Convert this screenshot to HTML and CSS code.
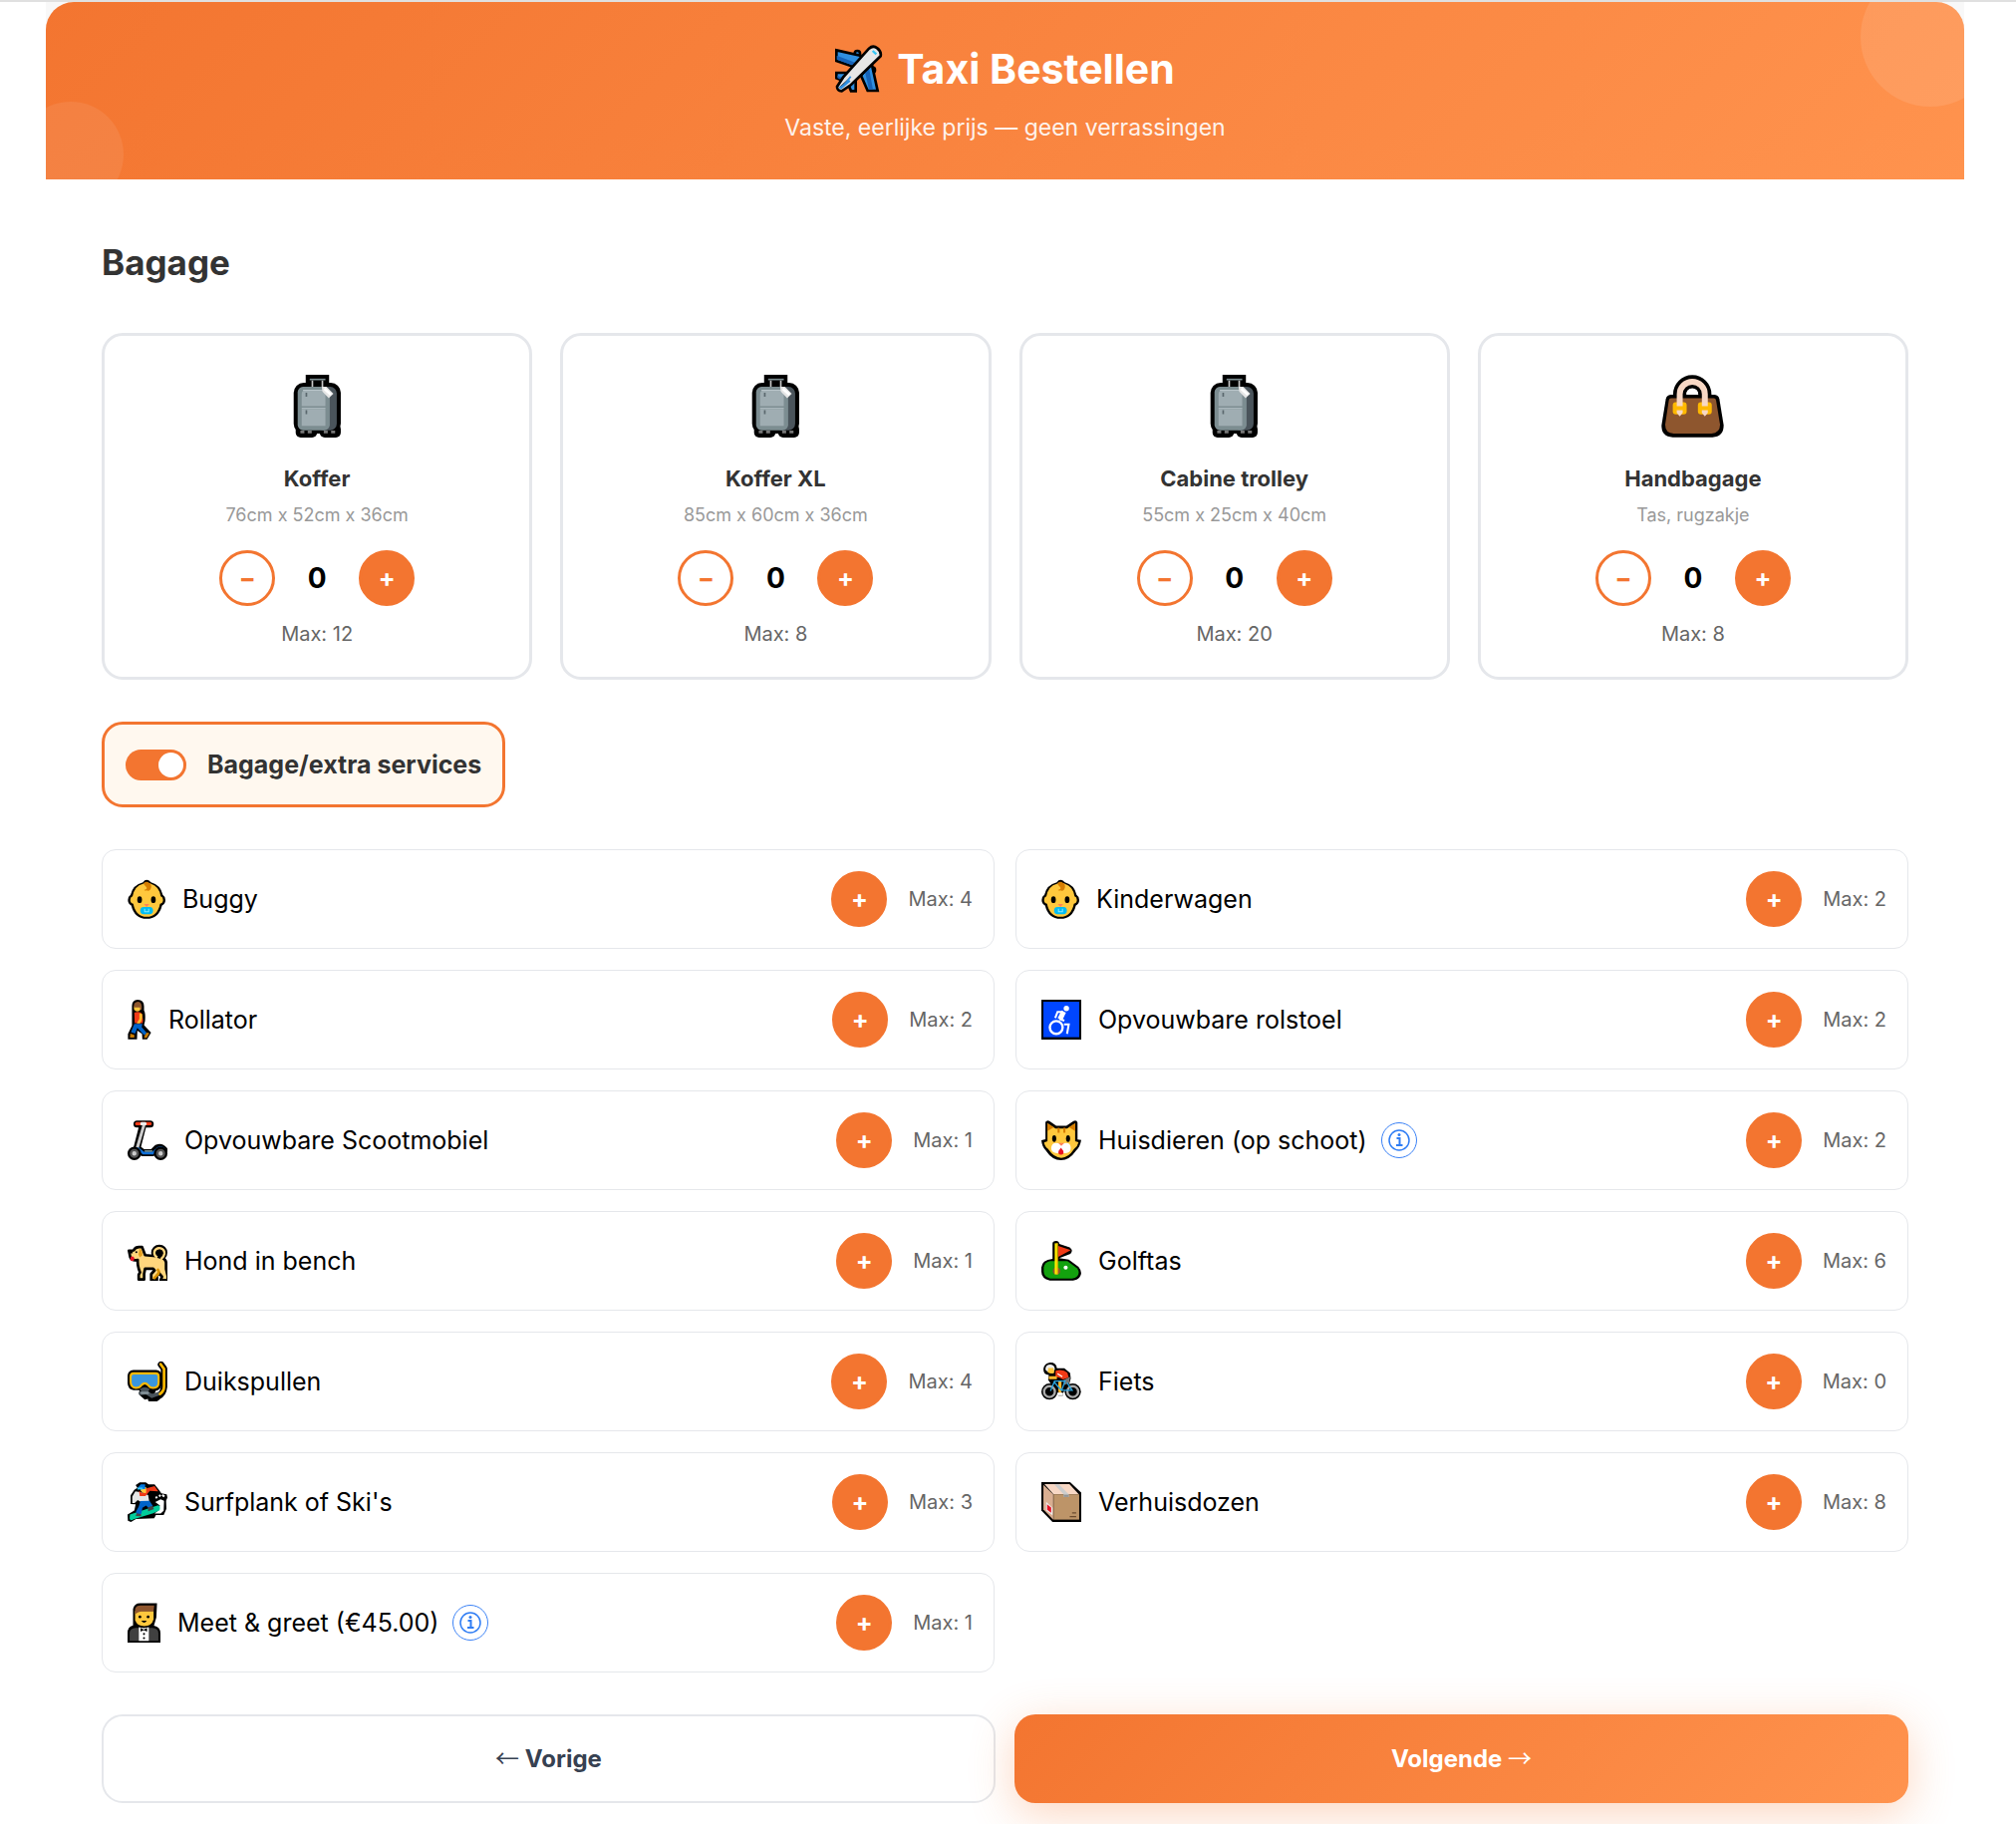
FILE: index.html
```html
<!DOCTYPE html>
<html lang="nl">
<head>
  <meta charset="UTF-8">
  <meta name="viewport" content="width=device-width, initial-scale=1.0">
  <title>Taxi Bestellen</title>
  <link rel="stylesheet" href="styles.css">
</head>
<body>
  <!-- Icon sprite -->
  <svg class="sprite" aria-hidden="true">
    <symbol id="i-koffer" viewBox="0 0 142 188">
      <rect x="36" width="70" height="50"/>
      <rect y="24" width="141" height="152" rx="30"/>
      <rect x="6" y="148" width="64" height="40" rx="15"/>
      <rect x="78" y="148" width="63" height="40" rx="15"/>
      <rect x="70" y="36" width="59" height="130" rx="20" fill="#4a545b"/>
      <rect x="12" y="36" width="96" height="130" rx="16" fill="#7c8d91"/>
      <path d="M24 58q0-12 12-12h59v48H24zM24 103h71v50H24z" fill="#9fadb2"/>
      <path d="M28 46h67M24 101h71" stroke="#b9c5ca" stroke-width="3"/>
      <path d="M38 54v12M38 106v12" stroke="#5b686e" stroke-width="5"/>
      <path d="M48 14h47" stroke="#7c8d91" stroke-width="5"/>
      <path d="M56 17v19M86 17v19" stroke="#c8c8c8" stroke-width="5"/>
      <path d="M84 36l14 0 21 21-14 13-19-20z" fill="#e6e6e6"/>
      <path d="M92 42l20 18" stroke="#fff" stroke-width="8"/>
      <path d="M20 171h12M42 171h12M90 171h12M112 171h12" stroke="#777" stroke-width="8"/>
    </symbol>
    <symbol id="i-tas" viewBox="0 0 190 188">
      <path d="M28 59q-11 1-14 13L1 152q-1 34 34 36h120q34-2 34-36L176 72q-3-12-14-13z"/>
      <path d="M30 70q-6 0-7 7L12 150q0 26 26 27h114q26-2 26-27L166 77q-1-7-7-7z" fill="#8e562e"/>
      <path d="M56 66v-8a38 38 0 0 1 76 0v8" fill="none" stroke="#000" stroke-width="40"/>
      <path d="M76 57q2-16 18-16t18 16z" fill="#fff"/>
      <rect x="35" y="82" width="42" height="37" rx="9" fill="#ffb900"/>
      <rect x="111" y="82" width="42" height="37" rx="9" fill="#ffb900"/>
      <path d="M56 94V58a38 38 0 0 1 76 0v36" fill="none" stroke="#f7d7c4" stroke-width="18"/>
      <path d="M47 106h18v8l-9 11-9-11zM123 106h18v8l-9 11-9-11z" fill="#f7d7c4"/>
    </symbol>
    <symbol id="i-vliegtuig" viewBox="0 0 144 144">
      <g fill="#2f8fe0" stroke="#000" stroke-width="8">
        <circle cx="67" cy="26" r="8"/><circle cx="112" cy="76" r="8"/>
        <path d="M4 16l88 20-30 32L4 48z"/>
        <path d="M110 56l18 82H98L78 92z"/>
        <path d="M4 84h34l-8 26L4 100z"/>
        <path d="M62 106v33H48l-10-24z"/>
      </g>
      <path d="M5 32v12l57 21 8-8zM90 82l12-12 12 64h-12zM7 92l25 12-4 6L7 100z" fill="#1763b8"/>
      <path d="M102 11q12-11 25-1t10 24L48 120l-28 19q-14-1-14-13l18-28z" fill="#e6e6e6" stroke="#000" stroke-width="8"/>
      <path d="M11 129q14-2 36-34M16 132l29-24" stroke="#2f8fe0" stroke-width="5"/>
      <path d="M113 18l11 10" stroke="#35c5f4" stroke-width="7"/>
    </symbol>
    <symbol id="i-baby" viewBox="0 0 113 118">
      <path d="M46 9q10-14 24 0 28 7 35 37 8 5 8 16t-10 16q-10 40-46 40T11 78Q1 73 1 62t8-16q7-30 37-37z"/>
      <path d="M46 14q11-7 24 0 24 7 29 37 7 2 7 11t-9 11q-8 39-40 39T17 73q-9-2-9-11t7-11q6-31 31-37z" fill="#ffc83d"/>
      <path d="M49 11q8-7 17 1 6 12-1 18-8 7-16 2 14-3 5-11-7-4-5-10z" fill="#d67d00"/>
      <path d="M66 12q6 16-6 21" fill="none" stroke="#d67d00" stroke-width="5"/>
      <ellipse cx="36" cy="61" rx="7" ry="10"/><ellipse cx="77" cy="61" rx="7" ry="10"/>
      <path d="M49 74h16l-8 9z" fill="#ff8257"/>
      <rect x="38" y="83" width="38" height="21" rx="10" fill="#00bcf2"/>
      <path d="M51 88v9h12v-9" fill="none" stroke="#85ecff" stroke-width="3"/>
    </symbol>
    <symbol id="i-lopen" viewBox="0 0 69 119">
      <path d="M29 0q19 1 19 19v13q5 8 3 31l-3 13 21 22-12 20H43l-1-16-14-10-1 26H0v-16l12-25V42V18Q12 1 29 0z"/>
      <path d="M18 19h20v10q-4 6-10 6t-10-6z" fill="#ffc83d"/>
      <path d="M18 21q-2-14 12-15 13 0 11 24l-5-1v-6H18z" fill="#8e562e"/>
      <path d="M19 39q10-5 20 0 8 13 5 31H20z" fill="#f03a17"/>
      <path d="M42 42q4 14-6 29l-10 0 8-14V41z" fill="#ffb92c"/>
      <path d="M19 72h24l-2 10 15 17-7 7-21-22-7 17-12-4z" fill="#0063c8"/>
      <path d="M7 101l12 4v8H6zM50 106l6-8 8 2-8 14h-8z" fill="#c77a00"/>
    </symbol>
    <symbol id="i-scooter" viewBox="0 0 118 118">
      <g fill="none" stroke-linecap="round" stroke-linejoin="round">
        <path d="M28 11h39M46 12L28 82M30 84l16 12h28l14-14q12-4 20 6" stroke="#000" stroke-width="21"/>
        <path d="M27 10h40" stroke="#f03a17" stroke-width="9"/>
        <path d="M49 12L28 84" stroke="#ccc" stroke-width="9"/>
        <path d="M42 10h10" stroke="#eee" stroke-width="9"/>
        <path d="M31 84l16 13h28l16-14q12-4 18 6" stroke="#0f6fd6" stroke-width="8"/>
        <path d="M52 91h20" stroke="#9bb" stroke-width="4"/>
      </g>
      <circle cx="20" cy="98" r="20"/><circle cx="98" cy="98" r="20"/>
      <circle cx="20" cy="98" r="10" fill="#ccc" stroke="#555" stroke-width="7"/>
      <circle cx="98" cy="98" r="10" fill="#ccc" stroke="#555" stroke-width="7"/>
    </symbol>
    <symbol id="i-hond" viewBox="0 0 118 118">
      <circle cx="94" cy="35" r="24"/>
      <path d="M4 29l14-1q4-10 16-10h9l9 24 32 3 20 6q8 3 10 12v20l5 21v12H98l4-10-8-10-7 7v13H70V98l10-11-4-5H52l-3 15v17H33v-14l4-7q-8-18-7-37-16 4-22-8z" fill="#ffd67d" stroke="#000" stroke-width="8" stroke-linejoin="round"/>
      <path d="M88 49q-12-7-8-19 6-11 18-8 12 4 11 16-1 9-10 16" fill="none" stroke="#ffd67d" stroke-width="7"/>
      <circle cx="95" cy="35" r="9"/>
      <path d="M36 22q8 4 8 21l-8 6-4-9z" fill="#e6a020"/>
      <path d="M88 83q10 11-2 20l-9 9" fill="none" stroke="#d99100" stroke-width="8"/>
      <circle cx="26" cy="33" r="3"/><path d="M2 28h13v9H4z"/>
      <ellipse cx="14" cy="53" rx="6" ry="7" fill="#e81224"/>
    </symbol>
    <symbol id="i-snorkel" viewBox="0 0 118 118">
      <path d="M99 9l9 12v54q-2 20-16 27-9 11-22 9" fill="none" stroke="#000" stroke-width="19" stroke-linecap="round" stroke-linejoin="round"/>
      <path d="M17 25h68q15 2 16 16v26q-2 18-18 20l-6 20-26 6-16-14v-14H18Q1 82 0 64V42q1-15 17-17z"/>
      <path d="M38 94l18-2 16 10 20-7" fill="none" stroke="#4a545b" stroke-width="11" stroke-linecap="round"/>
      <path d="M98 8l10 14v52q0 14-12 22" fill="none" stroke="#ffb900" stroke-width="8" stroke-linecap="round"/>
      <path d="M18 35h65q9 0 9 9v17q0 17-16 17-10 0-15-8-10-11-20 0-5 8-17 8Q9 77 9 60V44q0-9 9-9z" fill="#3a96dd" stroke="#ffb900" stroke-width="6"/>
      <path d="M36 82q15-12 30 0l-8 10H44z" fill="#4a545b"/>
      <path d="M42 93h18" stroke="#86949b" stroke-width="7" stroke-linecap="round"/>
    </symbol>
    <symbol id="i-snowboard" viewBox="0 0 118 118">
      <path d="M24 9L36 1h18l8 6h18l14 17 6 9 16 3 2 10-4 9 1 24-8 18H84l-5 10-54 2-15 9-9-4-1-18 20-12 4-18-15-1V39l11-16 9-6z"/>
      <path d="M98 51l10 4-1 30-9 8H80l10-8 6-16-14-10z" fill="#fff"/>
      <path d="M7 96l81-27q11-1 7 14l-19 9-58 18Q8 116 6 108z" fill="#00cc9b"/>
      <path d="M23 27l17 3 21 8 3 18-24 3-10-6-9 9h-7V43z" fill="#e6e6e6"/>
      <path d="M34 25l9 8 10-14 27-7 11 15-25-1-13 15H36z" fill="#f03a17"/>
      <path d="M39 15h16v17q-13 2-16-7z" fill="#ffc83d"/>
      <path d="M32 15l7-8h13v14H32z" fill="#0078e0"/>
      <path d="M29 19h16" stroke="#35c5f4" stroke-width="6"/>
      <path d="M38 56l27-1 10 16-13 6-7-8-11 7-3 18-14 2-2-9 8-15z" fill="#0063c8"/>
      <path d="M60 75l14-5 4 10-17 6M27 92l13 3 0 6-16-1z" fill="#444"/>
      <path d="M93 39l5 3M103 38l6 5M83 47l5-3" stroke="#fff" stroke-width="6"/>
    </symbol>
    <symbol id="i-smoking" viewBox="0 0 96 116">
      <path d="M16 66V18Q20 0 38 1h48l-2 42-7 24q19 4 19 22v27H0V88q0-18 16-22z"/>
      <path d="M22 24h54v24q-5 20-27 20T22 50z" fill="#ffc83d"/>
      <path d="M22 33V18Q25 8 38 8h40l-2 17-16 0H39l-9 3z" fill="#8e562e"/>
      <path d="M6 111V88q0-14 18-15h48q18 1 18 15v23H78V94v17H17V94v17z" fill="#404040"/>
      <path d="M33 71l14 3 15-3v40H33z" fill="#fff"/>
      <path d="M38 73l9 5 10-5v11l-10-4-9 4z"/>
      <circle cx="36" cy="41" r="4"/><circle cx="60" cy="41" r="4"/>
      <path d="M40 52h16q-7 12-16 0z"/>
      <circle cx="48" cy="91" r="3"/><circle cx="48" cy="103" r="3"/>
    </symbol>
    <symbol id="i-rolstoel" viewBox="0 0 118 118">
      <rect width="118" height="118"/>
      <rect x="6" y="6" width="106" height="105" fill="#0046ff"/>
      <circle cx="74" cy="26" r="8" fill="#fff"/>
      <g fill="none" stroke="#fff">
        <circle cx="44" cy="82" r="19" stroke-width="7"/>
        <path d="M41 54l7-18h16" stroke-width="6"/>
        <path d="M66 35L55 58" stroke-width="15"/>
        <path d="M53 57l15 5M67 73h14l-5 28" stroke-width="6"/>
      </g>
    </symbol>
    <symbol id="i-kat" viewBox="0 0 118 118">
      <path d="M12 5Q17-2 24 2l20 14h30L95 2q10-4 12 5v50l11 1q-4 22-15 31-20 29-45 29-26 0-45-29Q2 79 0 59l12-3z"/>
      <path d="M18 9l24 15h34l24-15v53l10 3q-3 13-13 20-17 26-38 26-22 0-39-26Q10 79 8 66l10-4z" fill="#ffc83d"/>
      <path d="M18 9l19 12-19 11zM100 9L82 21l18 11z" fill="#d67d00"/>
      <path d="M51 22v15M68 22v15" stroke="#d67d00" stroke-width="6"/>
      <ellipse cx="38" cy="54" rx="6" ry="10"/><ellipse cx="79" cy="54" rx="6" ry="10"/>
      <path d="M58 70q29-10 29 12 0 16-18 15H47q-18 0-18-15 2-22 29-12z" fill="#fff"/>
      <path d="M50 67h18l-9 9z" fill="#ff8257"/>
      <path d="M58 81l7 10q3 11-7 11t-7-11z" fill="#e81224"/>
    </symbol>
    <symbol id="i-golf" viewBox="0 0 118 118">
      <path d="M33 8q0-8 11-8 9 1 9 9l31 10q12 9 2 19L53 51l28 4 29 22q14 17 3 31-7 9-19 9H25Q0 112 0 91V79q1-23 33-26z"/>
      <path d="M26 60h51l29 21q9 13 0 24-5 6-15 6H26Q7 107 7 91V78q3-15 19-18z" fill="#13a10e"/>
      <ellipse cx="45" cy="89" rx="11" ry="10" fill="#8e562e"/>
      <path d="M50 15l37 12-37 20z" fill="#f03a17"/>
      <path d="M44 7v92" stroke="#fff100" stroke-width="9"/><path d="M47 7v92" stroke="#e6a800" stroke-width="3"/>
      <circle cx="72" cy="79" r="6" fill="#fff"/>
    </symbol>
    <symbol id="i-fiets" viewBox="0 0 118 118">
      <path d="M26 3q19 0 20 17l22 0 17 14 2 16-5 18-20 28 2 5H50L20 54l2-14Q6 39 6 22 8 5 26 3z"/>
      <circle cx="24" cy="89" r="24"/><circle cx="93" cy="89" r="24"/>
      <circle cx="24" cy="89" r="16" fill="none" stroke="#aaa" stroke-width="7"/>
      <circle cx="93" cy="89" r="16" fill="none" stroke="#aaa" stroke-width="7"/>
      <path d="M18 15h20v18q-9 6-20-2z" fill="#ffc83d"/>
      <path d="M12 23q0-14 15-14 13 1 13 15l-4 2v-7H20v9q-6 2-8-5z" fill="#eee"/>
      <path d="M42 27q23-5 35 6l4 14-17 6-10-5-12-3z" fill="#f03a17"/>
      <path d="M48 36l14 9" stroke="#fff" stroke-width="4"/>
      <path d="M22 48h24M55 58v32" stroke="#ffb92c" stroke-width="9"/>
      <path d="M65 55l20-10-3 19-14 5z" fill="#777"/>
      <path d="M55 60v36" stroke="#ffb92c" stroke-width="7"/><path d="M47 96h16" stroke="#fff" stroke-width="8"/>
      <path d="M27 87l12-29h31l-10 27h31L76 62M39 62l19 22" fill="none" stroke="#2aa5e0" stroke-width="4"/>
    </symbol>
    <symbol id="i-doos" viewBox="0 0 118 118">
      <path d="M0 0h85l33 31v87H33L0 84z"/>
      <path d="M6 8l29 28v75L6 81z" fill="#d9ae91"/>
      <path d="M9 6h74l28 30H36z" fill="#f7d7c4"/>
      <path d="M36 36h76v75H36z" fill="#bd9468"/>
      <path d="M38 7h14l29 29v8H66v-8z" fill="#ccc"/>
      <path d="M66 37h15v7H66z" fill="#949494"/>
      <path d="M14 58l19 18v22L14 84z" fill="#eee"/><path d="M17 66l12 9v16l-12-9z" fill="#e81224"/>
      <path d="M91 91h12M84 102h19" stroke="#6b4a2e" stroke-width="4"/>
    </symbol>
    <symbol id="i-info" viewBox="0 0 48 48">
      <circle cx="24" cy="24" r="20" fill="none" stroke="#2f7df4" stroke-width="3"/>
      <path d="M19 20h6v14M18 34h13" fill="none" stroke="#2f7df4" stroke-width="4"/>
      <circle cx="24" cy="13" r="3" fill="#2f7df4"/>
    </symbol>
  </svg>

  <div class="booking">
    <div class="header-wrap">
      <header class="header">
        <h1><svg class="plane" aria-hidden="true"><use href="#i-vliegtuig"/></svg>Taxi Bestellen</h1>
        <p>Vaste, eerlijke prijs — geen verrassingen</p>
      </header>
    </div>

    <main class="content">
      <h2>Bagage</h2>

      <!-- Luggage cards -->
      <div class="luggage-grid">
        <div class="luggage-card">
          <svg class="luggage-icon" aria-hidden="true"><use href="#i-koffer"/></svg>
          <h3>Koffer</h3>
          <p class="size">76cm x 52cm x 36cm</p>
          <div class="counter" data-max="12">
            <button type="button" class="round-btn minus" aria-label="Minder Koffer">−</button>
            <span class="count">0</span>
            <button type="button" class="round-btn plus" aria-label="Meer Koffer">+</button>
          </div>
          <p class="max">Max: 12</p>
        </div>
        <div class="luggage-card">
          <svg class="luggage-icon" aria-hidden="true"><use href="#i-koffer"/></svg>
          <h3>Koffer XL</h3>
          <p class="size">85cm x 60cm x 36cm</p>
          <div class="counter" data-max="8">
            <button type="button" class="round-btn minus" aria-label="Minder Koffer XL">−</button>
            <span class="count">0</span>
            <button type="button" class="round-btn plus" aria-label="Meer Koffer XL">+</button>
          </div>
          <p class="max">Max: 8</p>
        </div>
        <div class="luggage-card">
          <svg class="luggage-icon" aria-hidden="true"><use href="#i-koffer"/></svg>
          <h3>Cabine trolley</h3>
          <p class="size">55cm x 25cm x 40cm</p>
          <div class="counter" data-max="20">
            <button type="button" class="round-btn minus" aria-label="Minder Cabine trolley">−</button>
            <span class="count">0</span>
            <button type="button" class="round-btn plus" aria-label="Meer Cabine trolley">+</button>
          </div>
          <p class="max">Max: 20</p>
        </div>
        <div class="luggage-card">
          <svg class="luggage-icon" aria-hidden="true"><use href="#i-tas"/></svg>
          <h3>Handbagage</h3>
          <p class="size">Tas, rugzakje</p>
          <div class="counter" data-max="8">
            <button type="button" class="round-btn minus" aria-label="Minder Handbagage">−</button>
            <span class="count">0</span>
            <button type="button" class="round-btn plus" aria-label="Meer Handbagage">+</button>
          </div>
          <p class="max">Max: 8</p>
        </div>
      </div>

      <label class="extras-toggle" for="extras">
        <input type="checkbox" id="extras" checked>
        Bagage/extra services
      </label>

      <!-- Extra services -->
      <div class="extras-grid" id="extras-grid">
        <div class="extra">
          <svg class="extra-icon baby" aria-hidden="true"><use href="#i-baby"/></svg>
          <span class="extra-name">Buggy</span>
          <button type="button" class="round-btn plus" aria-label="Buggy toevoegen">+</button>
          <span class="max">Max: 4</span>
        </div>
        <div class="extra">
          <svg class="extra-icon baby" aria-hidden="true"><use href="#i-baby"/></svg>
          <span class="extra-name">Kinderwagen</span>
          <button type="button" class="round-btn plus" aria-label="Kinderwagen toevoegen">+</button>
          <span class="max">Max: 2</span>
        </div>
        <div class="extra">
          <svg class="extra-icon walker" aria-hidden="true"><use href="#i-lopen"/></svg>
          <span class="extra-name">Rollator</span>
          <button type="button" class="round-btn plus" aria-label="Rollator toevoegen">+</button>
          <span class="max">Max: 2</span>
        </div>
        <div class="extra">
          <svg class="extra-icon" aria-hidden="true"><use href="#i-rolstoel"/></svg>
          <span class="extra-name">Opvouwbare rolstoel</span>
          <button type="button" class="round-btn plus" aria-label="Opvouwbare rolstoel toevoegen">+</button>
          <span class="max">Max: 2</span>
        </div>
        <div class="extra">
          <svg class="extra-icon" aria-hidden="true"><use href="#i-scooter"/></svg>
          <span class="extra-name">Opvouwbare Scootmobiel</span>
          <button type="button" class="round-btn plus" aria-label="Opvouwbare Scootmobiel toevoegen">+</button>
          <span class="max">Max: 1</span>
        </div>
        <div class="extra">
          <svg class="extra-icon" aria-hidden="true"><use href="#i-kat"/></svg>
          <span class="extra-name">Huisdieren (op schoot)
            <button type="button" class="info-btn" aria-label="Informatie over huisdieren"><svg aria-hidden="true"><use href="#i-info"/></svg></button>
          </span>
          <button type="button" class="round-btn plus" aria-label="Huisdieren toevoegen">+</button>
          <span class="max">Max: 2</span>
        </div>
        <div class="extra">
          <svg class="extra-icon" aria-hidden="true"><use href="#i-hond"/></svg>
          <span class="extra-name">Hond in bench</span>
          <button type="button" class="round-btn plus" aria-label="Hond in bench toevoegen">+</button>
          <span class="max">Max: 1</span>
        </div>
        <div class="extra">
          <svg class="extra-icon" aria-hidden="true"><use href="#i-golf"/></svg>
          <span class="extra-name">Golftas</span>
          <button type="button" class="round-btn plus" aria-label="Golftas toevoegen">+</button>
          <span class="max">Max: 6</span>
        </div>
        <div class="extra">
          <svg class="extra-icon" aria-hidden="true"><use href="#i-snorkel"/></svg>
          <span class="extra-name">Duikspullen</span>
          <button type="button" class="round-btn plus" aria-label="Duikspullen toevoegen">+</button>
          <span class="max">Max: 4</span>
        </div>
        <div class="extra">
          <svg class="extra-icon" aria-hidden="true"><use href="#i-fiets"/></svg>
          <span class="extra-name">Fiets</span>
          <button type="button" class="round-btn plus" aria-label="Fiets toevoegen">+</button>
          <span class="max">Max: 0</span>
        </div>
        <div class="extra">
          <svg class="extra-icon" aria-hidden="true"><use href="#i-snowboard"/></svg>
          <span class="extra-name">Surfplank of Ski's</span>
          <button type="button" class="round-btn plus" aria-label="Surfplank of Ski's toevoegen">+</button>
          <span class="max">Max: 3</span>
        </div>
        <div class="extra">
          <svg class="extra-icon" aria-hidden="true"><use href="#i-doos"/></svg>
          <span class="extra-name">Verhuisdozen</span>
          <button type="button" class="round-btn plus" aria-label="Verhuisdozen toevoegen">+</button>
          <span class="max">Max: 8</span>
        </div>
        <div class="extra">
          <svg class="extra-icon tuxedo" aria-hidden="true"><use href="#i-smoking"/></svg>
          <span class="extra-name">Meet &amp; greet (€45.00)
            <button type="button" class="info-btn" aria-label="Informatie over meet &amp; greet"><svg aria-hidden="true"><use href="#i-info"/></svg></button>
          </span>
          <button type="button" class="round-btn plus" aria-label="Meet &amp; greet toevoegen">+</button>
          <span class="max">Max: 1</span>
        </div>
      </div>

      <div class="nav-buttons">
        <button type="button" class="nav-btn prev"><span class="arrow">←</span> Vorige</button>
        <button type="button" class="nav-btn next">Volgende <span class="arrow">→</span></button>
      </div>
    </main>
  </div>

  <script>
    // Plus and minus on the luggage cards
    document.querySelectorAll('.counter').forEach(counter => {
      const count = counter.querySelector('.count');
      const max = parseInt(counter.dataset.max);
      counter.querySelector('.minus').onclick = () => {
        count.textContent = Math.max(0, parseInt(count.textContent) - 1);
      };
      counter.querySelector('.plus').onclick = () => {
        count.textContent = Math.min(max, parseInt(count.textContent) + 1);
      };
    });

    // Show or hide the extra services
    document.getElementById('extras').onchange = function () {
      document.getElementById('extras-grid').hidden = !this.checked;
    };
  </script>
</body>
</html>
```
FILE: styles.css
```css
* {
  box-sizing: border-box;
  margin: 0;
  padding: 0;
}

body {
  font-family: Inter, "Liberation Sans", sans-serif;
  background: #fff;
  border-top: 2px solid #e0e0e0;
  color: #000;
}

button {
  font-family: inherit;
  cursor: pointer;
}

.sprite {
  display: none;
}

.booking {
  margin: 0 52px 0 46px;
}

.header-wrap {
  background: #f8f8f8;
}

.header {
  position: relative;
  overflow: hidden;
  padding: 41px 28px 36px;
  border-radius: 28px 28px 0 0;
  background: linear-gradient(135deg, #f37530 0%, #ff934e 100%);
  color: #fff;
  text-align: center;
}

/* Decorative circles */
.header::before,
.header::after {
  content: "";
  position: absolute;
  border-radius: 50%;
}

.header::before {
  top: -35px;
  right: -36px;
  width: 140px;
  height: 140px;
  background: rgba(255, 255, 255, 0.1);
}

.header::after {
  bottom: -28px;
  left: -28px;
  width: 106px;
  height: 106px;
  background: rgba(255, 255, 255, 0.08);
}

.header h1 {
  display: flex;
  align-items: center;
  justify-content: center;
  gap: 14px;
  font-size: 41px;
  line-height: 52px;
  font-weight: 700;
}

.plane {
  width: 48px;
  height: 48px;
}

.header p {
  margin-top: 17px;
  font-size: 23px;
  line-height: 32px;
  opacity: 0.9;
}

.content {
  padding: 61px 56px 21px;
}

.content h2 {
  margin-bottom: 49px;
  font-size: 35px;
  line-height: 44px;
  font-weight: 700;
  color: #333;
}

.luggage-grid {
  display: grid;
  grid-template-columns: repeat(4, 1fr);
  gap: 28px;
}

.luggage-card {
  display: flex;
  flex-direction: column;
  align-items: center;
  padding: 39px 28px 29px;
  border: 3px solid #e5e7eb;
  border-radius: 21px;
  background: #fff;
}

.luggage-icon {
  width: 63px;
  height: 63px;
  margin-bottom: 25px;
}

.luggage-card h3 {
  margin-bottom: 8px;
  font-size: 22px;
  line-height: 32px;
  font-weight: 700;
  color: #333;
}

.size {
  margin-bottom: 22px;
  font-size: 18px;
  line-height: 26px;
  color: #999;
}

.counter {
  display: flex;
  align-items: center;
  gap: 14px;
  margin-bottom: 14px;
}

.count {
  min-width: 56px;
  font-size: 28px;
  font-weight: 700;
  text-align: center;
}

.round-btn {
  flex: none;
  width: 56px;
  height: 56px;
  border: 3px solid #f37530;
  border-radius: 50%;
  font-size: 25px;
  font-weight: 700;
}

.minus {
  background: #fff;
  color: #f37530;
}

.plus {
  background: #f37530;
  color: #fff;
}

.max {
  font-size: 20px;
  line-height: 28px;
  color: #666;
}

.extras-toggle {
  display: inline-flex;
  align-items: center;
  gap: 21px;
  margin: 42px 0;
  padding: 21px;
  border: 3px solid #f37530;
  border-radius: 21px;
  background: #fff8ef;
  font-size: 25px;
  line-height: 38px;
  font-weight: 700;
  color: #333;
  cursor: pointer;
}

.extras-toggle input {
  appearance: none;
  display: flex;
  justify-content: flex-start;
  width: 61px;
  height: 31px;
  padding: 3px;
  border-radius: 16px;
  background: #ccc;
}

.extras-toggle input::before {
  content: "";
  width: 25px;
  height: 25px;
  border-radius: 50%;
  background: #fff;
}

.extras-toggle input:checked {
  justify-content: flex-end;
  background: #f37530;
}

.extras-grid {
  display: grid;
  grid-template-columns: repeat(2, 1fr);
  gap: 21px;
}

.extras-grid[hidden] {
  display: none;
}

.extra {
  display: flex;
  align-items: center;
  padding: 21px 21px 21px 25px;
  border: 1px solid #e5e7eb;
  border-radius: 14px;
  background: #fff;
}

.extra-icon {
  flex: none;
  width: 40px;
  height: 40px;
  margin-right: 17px;
}

.extra-icon.baby {
  width: 38px;
}

.extra-icon.walker {
  width: 24px;
}

.extra-icon.tuxedo {
  width: 33px;
}

.extra-name {
  flex: 1;
  display: flex;
  align-items: center;
  gap: 14px;
  font-size: 25px;
  line-height: 36px;
}

.extra .max {
  margin-left: 21px;
}

.info-btn {
  display: flex;
  align-items: center;
  justify-content: center;
  width: 36px;
  height: 36px;
  border: 1px solid #3b82f6;
  border-radius: 50%;
  background: #fff;
}

.info-btn svg {
  width: 24px;
  height: 24px;
}

.nav-buttons {
  display: grid;
  grid-template-columns: repeat(2, 1fr);
  gap: 19px;
  margin-top: 42px;
}

.nav-btn {
  height: 89px;
  border-radius: 21px;
  font-size: 24px;
  line-height: 36px;
  font-weight: 700;
}

.arrow {
  font-family: "Noto Sans CJK SC", sans-serif;
  font-weight: 400;
  line-height: 1;
}

.prev {
  border: 2px solid #e5e7eb;
  background: #fff;
  color: #374151;
}

.next {
  border: 0;
  background: linear-gradient(135deg, #f37530 0%, #ff934e 100%);
  box-shadow: 0 11px 45px rgba(244, 119, 48, 0.3);
  color: #fff;
}
```
